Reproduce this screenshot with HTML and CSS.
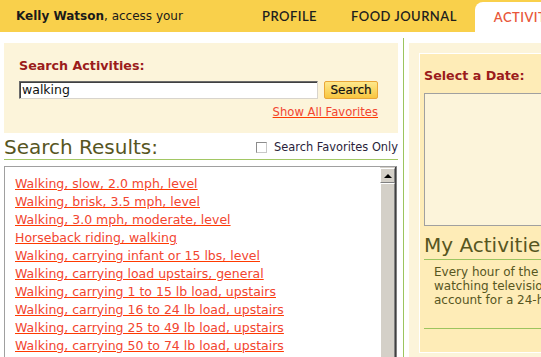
FILE: index.html
```html
<!DOCTYPE html>
<html>
<head>
<meta charset="utf-8">
<link rel="stylesheet" href="styles.css">
</head>
<body>
<div class="topbar">
  <div class="greeting"><b>Kelly Watson</b>, access your</div>
  <nav class="nav">
    <span class="nav-item">PROFILE</span>
    <span class="nav-sep"></span>
    <span class="nav-item">FOOD JOURNAL</span>
    <span class="nav-tab">ACTIVITIES</span>
  </nav>
</div>
<div class="main">
  <div class="left">
    <div class="search-panel">
      <div class="label">Search Activities:</div>
      <div class="search-row">
        <div class="input">walking</div>
        <div class="btn">Search</div>
      </div>
      <div class="fav-row"><a class="link">Show All Favorites</a></div>
    </div>
    <div class="results-head">
      <h2 class="heading">Search Results:</h2>
      <div class="fav-only"><span class="check"></span><span>Search Favorites Only</span></div>
    </div>
    <div class="results">
      <div class="list">
        <a class="link">Walking, slow, 2.0 mph, level</a>
        <a class="link">Walking, brisk, 3.5 mph, level</a>
        <a class="link">Walking, 3.0 mph, moderate, level</a>
        <a class="link">Horseback riding, walking</a>
        <a class="link">Walking, carrying infant or 15 lbs, level</a>
        <a class="link">Walking, carrying load upstairs, general</a>
        <a class="link">Walking, carrying 1 to 15 lb load, upstairs</a>
        <a class="link">Walking, carrying 16 to 24 lb load, upstairs</a>
        <a class="link">Walking, carrying 25 to 49 lb load, upstairs</a>
        <a class="link">Walking, carrying 50 to 74 lb load, upstairs</a>
      </div>
      <div class="scrollbar">
        <div class="sb-btn"><span class="arrow"></span></div>
        <div class="sb-thumb"></div>
      </div>
    </div>
  </div>
  <div class="divider"></div>
  <div class="right">
    <div class="inner">
      <div class="label">Select a Date:</div>
      <div class="calendar"></div>
      <h2 class="heading my">My Activities</h2>
      <div class="info">Every hour of the day counts, including<br>watching television and sleeping. Be sure to<br>account for a 24-hour day.</div>
    </div>
  </div>
</div>
</body>
</html>
```

FILE: styles.css
```css
html, body {
  margin: 0;
  padding: 0;
}
body {
  width: 541px;
  height: 357px;
  overflow: hidden;
  background: #fff;
  font-family: "DejaVu Sans", Verdana, sans-serif;
  color: #222;
}
.topbar {
  height: 32px;
  background: #f9d04b;
  display: flex;
  white-space: nowrap;
}
.greeting {
  flex: 0 0 246px;
  padding-left: 16px;
  font-size: 12px;
  line-height: 32px;
  color: #1a1a1a;
}
.nav {
  display: flex;
  align-items: center;
  font-family: Lato, "Open Sans", sans-serif;
  font-weight: 600;
  font-size: 13px;
  letter-spacing: 0.45px;
  color: #1e1e1e;
  flex: 1;
  overflow: hidden;
}
.nav-item {
  line-height: 32px;
}
.nav-sep {
  width: 1px;
  height: 9px;
  background: #fcebb0;
  margin: 0 17px;
}
.nav-item + .nav-sep + .nav-item {
  margin-right: 18px;
}
.nav-tab {
  align-self: flex-end;
  height: 30px;
  line-height: 30px;
  background: #fff;
  border-radius: 8px 0 0 0;
  padding-left: 19px;
  color: #e8573a;
  flex: 1;
}
.main {
  display: flex;
  margin-top: 6px;
  height: 319px;
}
.left {
  flex: 0 0 394px;
  margin-left: 4px;
  padding-top: 5px;
}
.search-panel {
  background: #fcf4da;
  padding: 15px 20px 14px 15px;
}
.label {
  font-weight: bold;
  font-size: 12.7px;
  line-height: 16px;
  color: #9b1c1c;
}
.search-row {
  display: flex;
  margin-top: 7px;
  gap: 6px;
}
.input {
  box-sizing: border-box;
  width: 299px;
  height: 18px;
  background: #fff;
  border: 1px solid;
  border-color: #6a6a6a #d8d4cc #d8d4cc #6a6a6a;
  box-shadow: inset 1px 1px 0 #404040;
  font-size: 12.5px;
  line-height: 15px;
  padding-left: 2px;
  color: #111;
}
.btn {
  box-sizing: border-box;
  width: 54px;
  height: 18px;
  border: 1px solid #eaa738;
  border-radius: 2px;
  background: linear-gradient(#fee88c, #f8c640);
  font-size: 12px;
  line-height: 16px;
  text-align: center;
  color: #111;
  -webkit-text-stroke: 0.2px #111;
}
.fav-row {
  margin-top: 6px;
  text-align: right;
  font-size: 11.6px;
  line-height: 14px;
}
.link {
  color: #f24530;
  text-decoration: underline;
  text-decoration-color: #ff3a00;
}
.results-head {
  display: flex;
  justify-content: space-between;
  align-items: flex-start;
  margin-top: 3px;
  border-bottom: 1px solid #a2c764;
}
.heading {
  margin: 0;
  font-weight: normal;
  font-size: 20px;
  line-height: 23px;
  color: #57561f;
}
.fav-only {
  display: flex;
  align-items: center;
  font-size: 11.4px;
  color: #2a1e3a;
  margin-top: 4px;
}
.check {
  box-sizing: border-box;
  width: 11px;
  height: 11px;
  border: 1px solid;
  border-color: #8c8c8c #c8c8c8 #c8c8c8 #8c8c8c;
  background: #fff;
  margin-right: 7px;
}
.results {
  display: flex;
  margin-top: 6px;
  width: 393px;
  height: 200px;
  box-sizing: border-box;
  border-top: 1px solid #a0a0a0;
  border-left: 1px solid #a0a0a0;
  border-right: 1px solid #808080;
}
.list {
  flex: 1;
  display: flex;
  flex-direction: column;
  align-items: flex-start;
  padding: 8px 0 0 10px;
  font-size: 12.5px;
  line-height: 18px;
  white-space: nowrap;
}
.scrollbar {
  flex: 0 0 15px;
  display: flex;
  flex-direction: column;
  background: #d4d0c8;
  border-left: 1px solid #fff;
  border-right: 1px solid #404040;
  padding-top: 1px;
}
.sb-btn, .sb-thumb {
  box-sizing: border-box;
  border-top: 1px solid #fff;
  border-left: 1px solid #fff;
  border-right: 1px solid #808080;
  border-bottom: 1px solid #808080;
  background: #d4d0c8;
}
.sb-btn {
  height: 15px;
  display: flex;
  align-items: center;
  justify-content: center;
}
.arrow {
  width: 0;
  height: 0;
  border-left: 4px solid transparent;
  border-right: 4px solid transparent;
  border-bottom: 4px solid #000;
}
.sb-thumb {
  flex: 1;
}
.divider {
  flex: 0 0 1px;
  margin-left: 5px;
  background: #9cc45e;
}
.right {
  flex: 1;
  margin: 5px 0 0 5px;
  background: #fcf4da;
  padding: 10px 0 0 10px;
  overflow: hidden;
}
.inner {
  box-sizing: border-box;
  height: 300px;
  width: 140px;
  background: #feecb7;
  border-top: 1px solid #fff;
  border-left: 1px solid #fff;
  border-bottom: 1px solid #fff;
  padding: 14px 0 0 4px;
  white-space: nowrap;
  overflow: hidden;
}
.calendar {
  margin-top: 9px;
  height: 133px;
  width: 200px;
  box-sizing: border-box;
  border: 1px solid #a0a0a0;
  background: #fcf4da;
}
.heading.my {
  margin-top: 7px;
  line-height: 24px;
  padding-bottom: 2px;
  border-bottom: 1px solid #9cc45e;
  width: 200px;
}
.info {
  width: 200px;
  font-size: 12px;
  line-height: 14px;
  color: #57561f;
  padding: 5px 0 21px 10px;
  border-bottom: 1px solid #9cc45e;
}
```
